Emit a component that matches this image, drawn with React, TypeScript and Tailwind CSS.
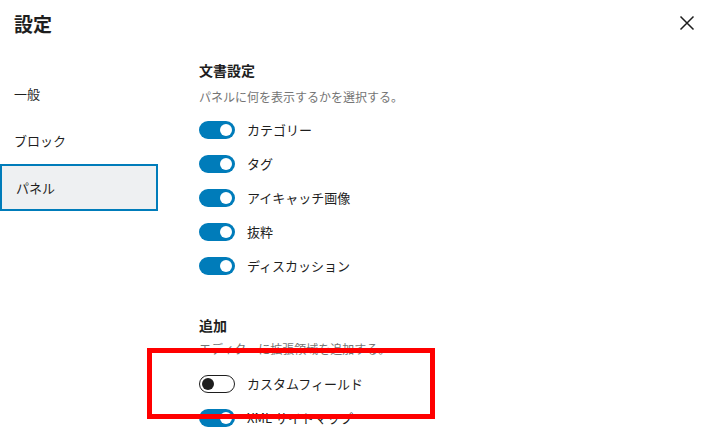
import React from "react";

const font = { fontFamily: '"Noto Sans CJK JP", "Noto Sans", sans-serif' };

const navItems = [
  { label: "一般", active: false },
  { label: "ブロック", active: false },
  { label: "パネル", active: true },
];

const docPanels = ["カテゴリー", "タグ", "アイキャッチ画像", "抜粋", "ディスカッション"];

function Toggle({ on }: { on: boolean }) {
  return on ? (
    <span className="relative inline-block w-[36px] h-[18px] rounded-full bg-[#007cba] shrink-0">
      <span className="absolute right-[3px] top-[3px] w-[12px] h-[12px] rounded-full bg-white" />
    </span>
  ) : (
    <span className="relative inline-block w-[36px] h-[18px] rounded-full border border-[#1e1e1e] bg-white shrink-0">
      <span className="absolute left-[2px] top-[2px] w-[12px] h-[12px] rounded-full bg-[#1e1e1e]" />
    </span>
  );
}

function Row({ label, on }: { label: string; on: boolean }) {
  return (
    <div className="h-[34px] flex items-center gap-[12px]">
      <Toggle on={on} />
      <span className="text-[13px] text-[#1e1e1e]">{label}</span>
    </div>
  );
}

export default function App() {
  return (
    <div className="relative w-[713px] h-[440px] bg-white overflow-hidden" style={font}>
      {/* Header */}
      <div className="h-[46px] flex items-center justify-between pl-[14px] pr-[14px]">
        <h1 className="text-[19px] font-bold text-[#1e1e1e] leading-none">設定</h1>
        <button className="w-[24px] h-[24px] flex items-center justify-center text-[#1e1e1e]">
          <svg width="24" height="24" viewBox="0 0 24 24" fill="none">
            <path d="M5.5 5.5l13 13M18.5 5.5l-13 13" stroke="currentColor" strokeWidth="1.5" />
          </svg>
        </button>
      </div>

      <div className="flex">
        {/* Sidebar */}
        <nav className="w-[158px] shrink-0 pt-[24px] flex flex-col">
          {navItems.map(({ label, active }) => (
            <div
              key={label}
              className={`h-[47px] flex items-center pl-[14px] text-[13px] text-[#1e1e1e] ${
                active ? "border-2 border-[#007cba] bg-[#eef0f2] pl-[12px]" : ""
              }`}
            >
              {label}
            </div>
          ))}
        </nav>

        {/* Content */}
        <div className="flex-1 pl-[41px] pt-[14px]">
          <h2 className="h-[20px] leading-[20px] text-[14px] font-bold text-[#1e1e1e]">文書設定</h2>
          <p className="mt-[9px] h-[16px] leading-[16px] text-[12px] text-[#757575]">
            パネルに何を表示するかを選択する。
          </p>
          <div className="mt-[8px]">
            {docPanels.map((l) => (
              <Row key={l} label={l} on />
            ))}
          </div>

          <h2 className="mt-[32px] h-[20px] leading-[20px] text-[14px] font-bold text-[#1e1e1e]">追加</h2>
          <p className="mt-[6px] h-[16px] leading-[16px] text-[12px] text-[#757575]">
            エディターに拡張領域を追加する。
          </p>
          <div className="mt-[10px]">
            <Row label="カスタムフィールド" on={false} />
            <Row label="XML サイトマップ" on />
          </div>
        </div>
      </div>

      {/* annotation */}
      <div className="absolute left-[147px] top-[348px] w-[288px] h-[71px] border-[5px] border-[#ff0000]" />
    </div>
  );
}
